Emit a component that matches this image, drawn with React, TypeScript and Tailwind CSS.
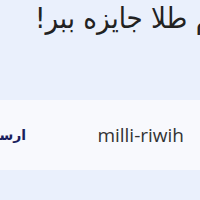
export default function App() {
  return (
    <div className="w-[200px] h-[200px] overflow-hidden bg-[#eaf0fc] flex flex-col">
      {/* heading, overflowing to the right */}
      <div className="flex pl-[35px] h-[100px]">
        <h1
          dir="rtl"
          className="whitespace-nowrap text-[29px] leading-[36px] text-[#222] font-['DejaVu_Sans',sans-serif] origin-left scale-x-[0.9]"
        >
          یک گرم طلا جایزه ببر!
        </h1>
      </div>

      {/* code box */}
      <div className="h-[70px] bg-[#f8f9fd] flex items-center justify-between -ml-[18px] pr-[16px]">
        <button
          dir="rtl"
          className="font-bold text-[14px] text-[#1b1f5e] font-['DejaVu_Sans',sans-serif]"
        >
          ارسال
        </button>
        <span className="text-[19px] text-[#333] font-['Open_Sans',sans-serif]">
          milli-riwih
        </span>
      </div>
    </div>
  );
}
